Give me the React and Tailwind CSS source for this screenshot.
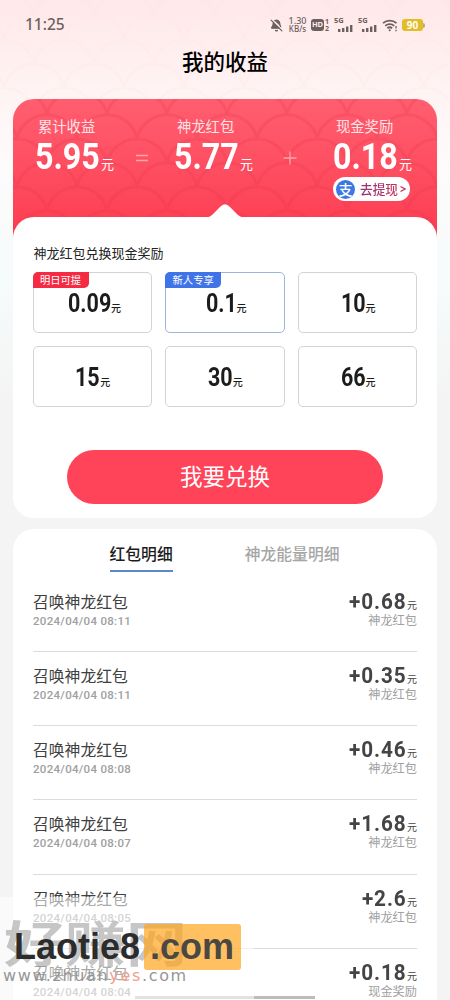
import { BellOff } from 'lucide-react';
import clsx from 'clsx';

const amounts = [
  { value: '0.09', tag: '明日可提', tagColor: 'bg-[#f52b43]' },
  { value: '0.1', tag: '新人专享', tagColor: 'bg-[#3f74e8]', active: true },
  { value: '10' },
  { value: '15' },
  { value: '30' },
  { value: '66' },
];

const records = [
  { title: '召唤神龙红包', time: '2024/04/04 08:11', value: '+0.68', type: '神龙红包' },
  { title: '召唤神龙红包', time: '2024/04/04 08:11', value: '+0.35', type: '神龙红包' },
  { title: '召唤神龙红包', time: '2024/04/04 08:08', value: '+0.46', type: '神龙红包' },
  { title: '召唤神龙红包', time: '2024/04/04 08:07', value: '+1.68', type: '神龙红包' },
  { title: '召唤神龙红包', time: '2024/04/04 08:05', value: '+2.6', type: '神龙红包' },
  { title: '召唤神龙红包', time: '2024/04/04 08:04', value: '+0.18', type: '现金奖励' },
];

function Scales({ id, color, className }) {
  return (
    <svg className={className} width="100%" height="100%">
      <defs>
        <pattern id={id} width="60" height="48" x="34" y="39" patternUnits="userSpaceOnUse">
          <g fill="none" stroke={color} strokeWidth="3">
            <path d="M0 24A31 31 0 0 1 60 24" />
            <path d="M-30 48A31 31 0 0 1 30 48M30 48A31 31 0 0 1 90 48" />
          </g>
        </pattern>
      </defs>
      <rect width="100%" height="100%" fill={`url(#${id})`} />
    </svg>
  );
}

function Signal() {
  return (
    <div className="relative h-[14px] w-[19px]">
      <span className="absolute -top-[1px] left-0 text-[7.5px] leading-none font-bold">5G</span>
      <svg className="absolute right-0 bottom-0" width="15" height="7" fill="currentColor">
        <rect x="0" y="4" width="2.4" height="3" />
        <rect x="4" y="3" width="2.4" height="4" />
        <rect x="8" y="1.5" width="2.4" height="5.5" />
        <rect x="12" y="0" width="2.4" height="7" />
      </svg>
    </div>
  );
}

function StatusBar() {
  return (
    <div className="flex h-[50px] items-center justify-between pr-[25px] pl-[25px] font-['Noto_Sans'] text-[#6c5f60]">
      <span className="text-[15.5px] leading-none font-medium">11:25</span>
      <div className="flex items-center">
        <BellOff className="h-[13px] w-[13px] fill-current" strokeWidth={2.2} />
        <div className="ml-[4px] w-[21px] text-center leading-[8px] font-medium">
          <div className="text-[9px]">1.30</div>
          <div className="text-[8px]">KB/s</div>
        </div>
        <div className="ml-[3px] flex h-[12px] w-[13px] items-center justify-center rounded-[3px] bg-[#6c5f60] text-[7.5px] font-bold text-[#ffecec]">
          HD
        </div>
        <div className="ml-[1px] w-[5px] text-[7px] leading-[7px] font-bold">
          <div>1</div>
          <div>2</div>
        </div>
        <div className="ml-[4px] flex gap-[5px]">
          <Signal />
          <Signal />
        </div>
        <svg className="ml-[5px]" width="16" height="13" viewBox="0 0 16 13" fill="none" stroke="currentColor" strokeWidth="1.8">
          <path d="M1 4.2A10 10 0 0 1 14.5 4.2" />
          <path d="M3.3 6.9A6.6 6.6 0 0 1 12.2 6.9" />
          <path d="M5.4 9.3A3.6 3.6 0 0 1 10.1 9.3" />
          <circle cx="7.7" cy="11.3" r="1" fill="currentColor" stroke="none" />
          <path d="M14 7v2.5M14 10.8v1.5" strokeWidth="1.3" />
        </svg>
        <div className="ml-[4px] flex h-[12px] w-[21px] items-center justify-center rounded-[3px] bg-[#e3bd28] text-[10px] font-bold text-white">
          90
        </div>
        <div className="h-[5px] w-[2px] rounded-r bg-[#b9a98c]" />
      </div>
    </div>
  );
}

function Total({ label, value, className }) {
  return (
    <div className={clsx('text-white', className)}>
      <div className="pl-[3px] text-[14.3px] leading-[19px] text-[#ffe3e6]">{label}</div>
      <div className="mt-[5px] flex h-[34px] items-baseline">
        <span className="w-[66px] origin-left scale-x-[.87] font-['Roboto'] text-[37px] leading-[34px] font-bold whitespace-nowrap">
          {value}
        </span>
        <span className="text-[13px] leading-none">元</span>
      </div>
    </div>
  );
}

function Amount({ value, tag, tagColor, active }) {
  return (
    <div
      className={clsx(
        'relative flex h-[61px] items-center justify-center rounded-[5px] border bg-white text-[#1c1c1c]',
        active ? 'border-[#9db4dc]' : 'border-[#d3d3d6]',
      )}
    >
      {tag && (
        <span
          className={clsx(
            'absolute -top-px -left-px flex h-[16px] w-[56px] items-center justify-center rounded-tl-[5px] rounded-br-[5px] text-[10.3px] leading-none text-white',
            tagColor,
          )}
        >
          {tag}
        </span>
      )}
      <div className="flex items-baseline pt-[2px] pr-[3px]">
        <span className="origin-right scale-x-[.86] font-['Roboto'] text-[25px] leading-[28px] font-bold">{value}</span>
        <span className="text-[10px] leading-none font-medium">元</span>
      </div>
    </div>
  );
}

function Record({ title, time, value, type }) {
  return (
    <div className="flex h-[74.25px] items-start justify-between border-b border-[#dcdcdc] pt-[13px]">
      <div>
        <div className="text-[15.8px] leading-[22px] text-[#404040]">{title}</div>
        <div className="mt-[1px] font-['Roboto'] text-[11.5px] leading-[14px] font-medium tracking-[0.3px] text-[#a0a0a0]">
          {time}
        </div>
      </div>
      <div className="text-right">
        <div className="flex h-[22px] items-baseline justify-end text-[#444]">
          <span className="origin-right scale-x-[.92] font-['Roboto'] text-[22.5px] leading-[20px] font-bold tracking-[1px]">
            {value}
          </span>
          <span className="text-[10px] leading-none">元</span>
        </div>
        <div className="-mt-px text-[12.2px] leading-[16px] text-[#a0a0a0]">{type}</div>
      </div>
    </div>
  );
}

function Watermark() {
  return (
    <div className="absolute bottom-0 left-0 h-[103px] w-[254px] bg-white/55">
      <div className="absolute top-[10px] left-[4px] scale-y-[.8] text-[61px] leading-[68px] font-bold whitespace-nowrap text-[#8d8d8d]/50">
        好赚网
      </div>
      <div className="absolute top-[27px] left-[144px] h-[46px] w-[97px] rounded-[3px] bg-[#ffa51f]/70" />
      <div className="absolute top-[27px] left-[14px] flex h-[46px] items-center font-['Liberation_Sans'] text-[36px] leading-none font-bold whitespace-nowrap">
        <span className="w-[136px] text-[#2c2c2c]">Laotie8</span>
        <span className="text-[#4b4843]">.com</span>
      </div>
      <div className="absolute top-[70px] left-[3px] font-['DejaVu_Sans'] text-[16px] leading-[18px] tracking-[1.65px] whitespace-nowrap text-[#969696]">
        www.zhuan<span className="text-[#f0a08e]">yes</span>.com
      </div>
    </div>
  );
}

export default function App() {
  return (
    <div className="relative h-[1000px] w-[450px] overflow-hidden bg-[#f4f4f4] font-['Noto_Sans_CJK_SC',sans-serif]">
      <div className="absolute inset-x-0 top-0 h-[420px] bg-[linear-gradient(#ffe8e9_0,#fff3f3_90px,#fdfbfb_170px,#f6fbfb_280px,#f4f4f4_400px)]" />
      <div className="absolute inset-x-0 top-0 h-[99px]">
        <Scales id="page-scales" color="#ffdede" className="opacity-15" />
      </div>

      <div className="relative">
        <StatusBar />
        <h1 className="h-[49px] text-center text-[21.5px] leading-[22px] font-medium text-black">我的收益</h1>

        {/* Earnings card */}
        <section className="relative mx-[13px] h-[418.5px] overflow-hidden rounded-[21px] bg-white">
          <div className="absolute inset-x-0 top-0 h-[140px] bg-gradient-to-b from-[#ff5e70] to-[#fd3a50]">
            <Scales id="card-scales" color="#e8344a" className="opacity-22" />
          </div>
          <div className="relative flex h-[118px] items-start pt-[17px] pl-[22px]">
            <Total label="累计收益" value="5.95" className="w-[100px]" />
            <svg className="mt-[35px]" width="14" height="14" stroke="#ffa3ad" strokeWidth="1.5">
              <path d="M1 4.5h12M1 9.5h12" />
            </svg>
            <Total label="神龙红包" value="5.77" className="ml-[25px] w-[109px]" />
            <svg className="mt-[35px]" width="14" height="14" stroke="#ffa3ad" strokeWidth="1.3">
              <path d="M.5 7h13M7 .5v13" />
            </svg>
            <div className="ml-[36px]">
              <Total label="现金奖励" value="0.18" />
              <button className="mt-[3px] flex h-[24px] w-[77px] items-center rounded-full bg-white pl-[3px] text-[#c4305a]">
                <span className="flex h-[19px] w-[19px] items-center justify-center rounded-full bg-[#3c78e4] text-[14px] leading-none font-medium text-white">
                  支
                </span>
                <span className="ml-[5px] bg-gradient-to-r from-[#93327a] to-[#c8305a] bg-clip-text text-[12.7px] leading-[18px] font-medium text-transparent">
                  去提现
                </span>
                <svg className="ml-[2px]" width="6" height="8" fill="none" stroke="currentColor" strokeWidth="1.2">
                  <path d="M.5 1.5L5 4L.5 6.5" />
                </svg>
              </button>
            </div>
          </div>

          <div className="relative h-[301px] rounded-t-[21px] bg-white px-[19.5px] pt-[26px]">
            <svg className="absolute -top-[13px] left-[192px]" width="40" height="14" fill="#fff">
              <path d="M0 14Q6 13 9 9L15 3Q20 -2.5 25 3L31 9Q34 13 40 14Z" />
            </svg>
            <div className="pl-[1px] text-[13px] leading-[20px] text-[#222]">神龙红包兑换现金奖励</div>
            <div className="mt-[9px] grid grid-cols-3 gap-[13px]">
              {amounts.map((item) => (
                <Amount key={item.value} {...item} />
              ))}
            </div>
            <button className="mt-[42.5px] ml-[34.5px] h-[54px] w-[316px] rounded-full bg-[#ff4358] pb-[2px] text-[22.5px] leading-none text-white">
              我要兑换
            </button>
          </div>
        </section>

        {/* Records */}
        <section className="mx-[13px] mt-[11px] h-[472px] overflow-hidden rounded-t-[21px] bg-white px-[20px]">
          <div className="flex h-[49px] pl-[76.5px] text-[15.8px]">
            <div className="h-[43.5px] border-b-2 border-[#5c87c8] pt-[13px] leading-[24px] font-medium text-[#1c1c1c]">
              红包明细
            </div>
            <div className="ml-[72px] pt-[13px] leading-[24px] font-medium text-[#a6a6a6]">神龙能量明细</div>
          </div>
          {records.map((item, i) => (
            <Record key={i} {...item} />
          ))}
        </section>
      </div>

      <Watermark />
      <div className="absolute bottom-[1px] left-[135px] flex h-[3px]">
        <div className="w-[119px] bg-[#e2e2e2]" />
        <div className="w-[61px] bg-[#bcbcbc]" />
      </div>
    </div>
  );
}
